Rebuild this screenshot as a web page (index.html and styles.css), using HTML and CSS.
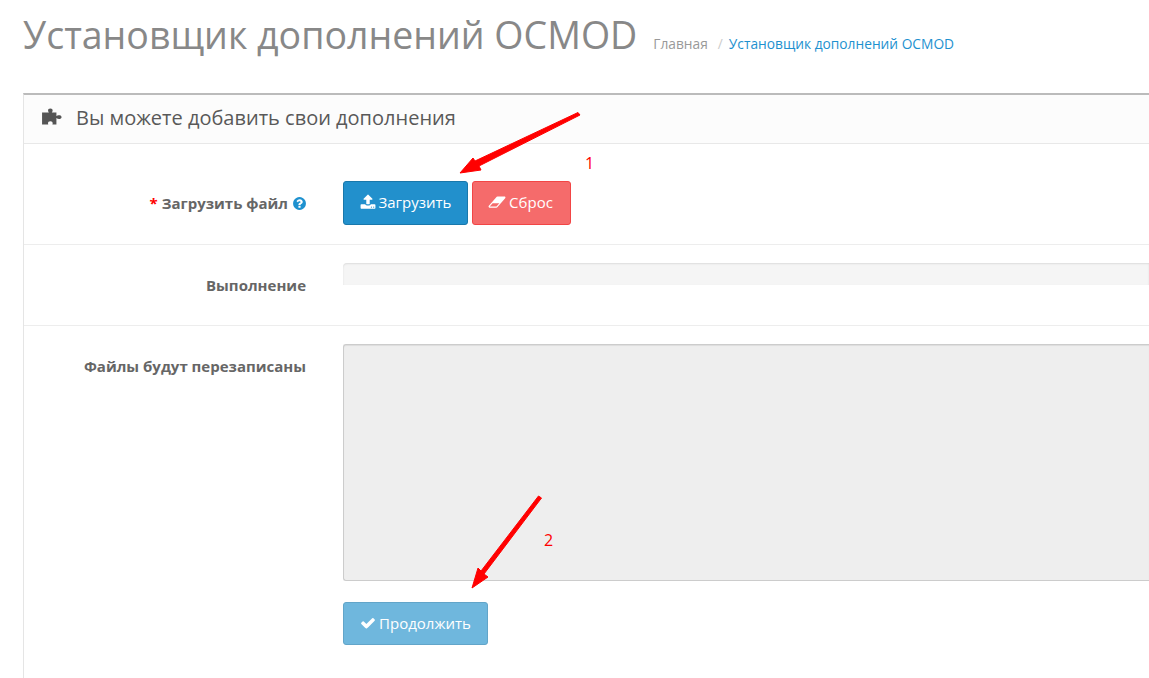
FILE: index.html
```html
<!DOCTYPE html>
<html lang="ru">
<head>
<meta charset="utf-8">
<title>Установщик дополнений OCMOD</title>
<link rel="stylesheet" href="styles.css">
</head>
<body>
<header class="page-header">
  <h1 class="page-title">Установщик дополнений OCMOD</h1>
  <ul class="crumbs">
    <li class="crumb">Главная</li>
    <li class="crumb-sep">/</li>
    <li class="crumb crumb-link">Установщик дополнений OCMOD</li>
  </ul>
</header>
<section class="panel">
  <div class="panel-heading">
    <svg class="icon-puzzle" viewBox="0 0 18 15.400"><path d="M0 4h6.200C5 2.800 5 .4 7.500 .4S10 2.800 8.800 4H13v3.400c1-1 4-1.400 4.600.6.500 2-3 2.700-4.600 1V15H9.300c.7-1.300.2-3-1.800-3s-2.500 1.700-1.800 3H0z"/></svg>
    <h2 class="panel-title">Вы можете добавить свои дополнения</h2>
  </div>
  <div class="row row-upload">
    <div class="label"><span class="req">*</span> Загрузить файл <svg class="icon-help" viewBox="0 0 1792 1792"><path d="M1024 1376v-192q0-14-9-23t-23-9h-192q-14 0-23 9t-9 23v192q0 14 9 23t23 9h192q14 0 23-9t9-23zm256-672q0-88-55.500-163t-138.500-116-170-41q-243 0-371 213-15 24 8 42l132 100q7 6 19 6 16 0 25-12 53-68 86-92 34-24 86-24 48 0 85.500 26t37.500 59q0 38-20 61t-68 45q-63 28-115.500 86.500t-52.500 125.500v36q0 14 9 23t23 9h192q14 0 23-9t9-23q0-19 21.500-49.500t54.500-49.500q32-18 49-28.500t46-35 44.500-48 28-60.500 12.500-81zm384 192q0 209-103 385.500t-279.500 279.500-385.500 103-385.500-103-279.500-279.500-103-385.500 103-385.500 279.500-279.500 385.500-103 385.500 103 279.500 279.500 103 385.500z"/></svg></div>
    <div class="control buttons">
      <button class="btn btn-primary"><svg class="btn-icon" viewBox="0 0 1792 1792"><path d="M1344 1472q0-26-19-45t-45-19-45 19-19 45 19 45 45 19 45-19 19-45zm256 0q0-26-19-45t-45-19-45 19-19 45 19 45 45 19 45-19 19-45zm128-224v320q0 40-28 68t-68 28h-1472q-40 0-68-28t-28-68v-320q0-40 28-68t68-28h427q21 56 70.500 92t110.500 36h256q61 0 110.500-36t70.500-92h427q40 0 68 28t28 68zm-325-648q-17 40-59 40h-256v448q0 26-19 45t-45 19h-256q-26 0-45-19t-19-45v-448h-256q-42 0-59-40-17-39 14-69l448-448q18-19 45-19t45 19l448 448q31 30 14 69z"/></svg>Загрузить</button>
      <button class="btn btn-danger"><svg class="btn-icon btn-icon-wide" viewBox="0 0 2048 1792"><path d="M960 1408l336-384h-768l-336 384h768zm1013-1077q15 34 9.500 71.500t-30.500 65.500l-896 1024q-38 44-96 44h-768q-38 0-69.500-20.500t-47.500-54.500q-15-34-9.500-71.500t30.500-65.500l896-1024q38-44 96-44h768q38 0 70 20.500t47 54.500z"/></svg>Сброс</button>
    </div>
  </div>
  <div class="row row-progress">
    <div class="label">Выполнение</div>
    <div class="control"><div class="progress"></div></div>
  </div>
  <div class="row row-files">
    <div class="label">Файлы будут перезаписаны</div>
    <div class="control">
      <div class="textarea"></div>
      <button class="btn btn-continue"><svg class="btn-icon" viewBox="0 0 1792 1792"><path d="M1671 566q0 40-28 68l-724 724-136 136q-28 28-68 28t-68-28l-136-136-362-362q-28-28-28-68t28-68l136-136q28-28 68-28t68 28l294 295 656-657q28-28 68-28t68 28l136 136q28 28 28 68z"/></svg>Продолжить</button>
    </div>
  </div>
</section>
<svg class="annotations" viewBox="0 0 1149 678" width="1149" height="678">
  <path class="arrow" d="M578 112.500 L580 115 L479 166 L481 170 L460 173 L473 158 L475 161 Z"/>
  <path class="arrow" d="M538.500 496 L541.500 498 L484 574 L488 577 L472 588 L478 568 L481 571 Z"/>
</svg>
<span class="note note-one">1</span>
<span class="note note-two">2</span>
</body>
</html>
```
FILE: styles.css
```css
* { box-sizing: border-box; }
html, body { margin: 0; height: 678px; overflow: hidden; background: #fff; }
body { position: relative; font-family: "Open Sans", sans-serif; color: #666; padding: 0 0 0 23px; }

.page-header { display: flex; align-items: baseline; height: 93px; padding-top: 10px; }
.page-title { margin: 0; font-size: 37.500px; line-height: 50px; font-weight: 400; color: #888; }
.crumbs { list-style: none; margin: 0 0 0 16px; padding: 0; display: flex; font-size: 13.750px; }
.crumb { color: #999; }
.crumb-sep { color: #ccc; margin: 0 6px 0 10px; }
.crumb-link { color: #1e91cf; }

.panel { height: 585px; border-top: 2px solid #bbb; border-left: 1px solid #e5e5e5; }
.panel-heading { display: flex; align-items: center; height: 49px; background: #fcfcfc; border-bottom: 1px solid #e8e8e8; padding-left: 18px; }
.icon-puzzle { width: 20px; height: 17px; fill: #555; margin: -5px 14px 0 0; }
.panel-title { margin: -4px 0 0; font-size: 20px; font-weight: 400; color: #595959; }

.row { display: grid; grid-template-columns: 282px 1fr; column-gap: 37px; border-bottom: 1px solid #ededed; }
.row-upload { height: 101px; padding-top: 37px; }
.row-progress { height: 81px; padding-top: 18px; }
.row-files { padding-top: 18px; border-bottom: 0; }
.label { text-align: right; font-size: 15px; font-weight: 700; color: #666; line-height: 44px; }
.row-upload .label { display: flex; justify-content: flex-end; align-items: center; height: 44px; gap: 4px; }
.row-progress .label, .row-files .label { line-height: 20px; padding-top: 12px; }
.req { color: #f00; }
.icon-help { width: 15px; height: 15px; fill: #1e91cf; margin-right: -1px; }

.buttons { display: flex; gap: 4px; }
.btn { display: flex; align-items: center; justify-content: center; height: 44px; padding: 0 0 2px; border-radius: 3px; border: 1px solid; color: #fff; font: 400 15px "Open Sans", sans-serif; }
.btn-primary { width: 125px; background: #2290cc; border-color: #1978ab; }
.btn-danger { width: 99px; padding-right: 2px; background: #f56b6b; border-color: #f24545; }
.btn-continue { width: 145px; height: 43px; margin-top: 21px; background: #6fb7dd; border-color: #62a5c9; }
.btn-icon { width: 16px; height: 16px; fill: #fff; margin-right: 3px; }
.btn-icon-wide { width: 18px; }

.progress { height: 22px; background: #f5f5f5; border-radius: 4px 0 0 0; box-shadow: inset 0 1px 2px rgba(0,0,0,.1); }
.textarea { height: 237px; background: #eee; border: 1px solid #ccc; border-right: 0; border-radius: 3px 0 0 3px; box-shadow: inset 0 1px 1px rgba(0,0,0,.075); }

.annotations { position: absolute; left: 0; top: 0; }
.arrow { fill: #f00; stroke: #f00; stroke-width: 1; stroke-linejoin: round; }
.note { position: absolute; color: #f00; font-size: 16px; line-height: 20px; }
.note-one { left: 585px; top: 153px; }
.note-two { left: 544px; top: 530px; }
```
